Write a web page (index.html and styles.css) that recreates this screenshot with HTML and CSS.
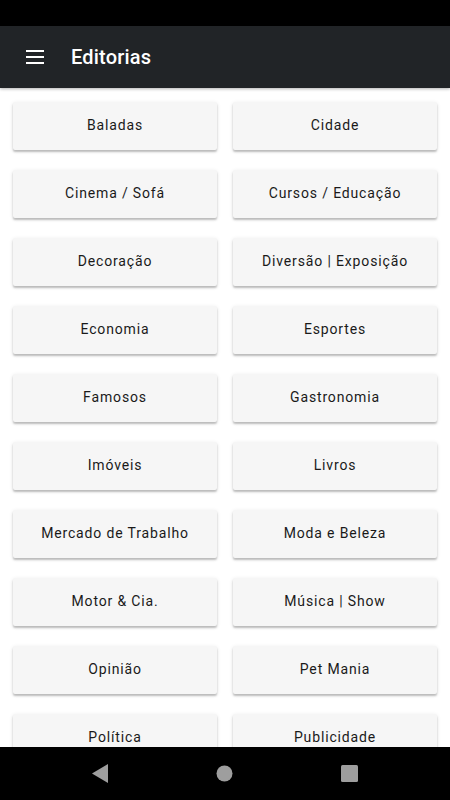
FILE: index.html
```html
<!DOCTYPE html>
<html>
<head>
<meta charset="utf-8">
<link rel="stylesheet" href="styles.css">
</head>
<body>
<div class="screen">
  <div class="status"></div>
  <header class="appbar">
    <svg class="menu" width="18" height="14" viewBox="0 0 18 14"><rect x="0" y="0" width="18" height="2" fill="#fff"/><rect x="0" y="6" width="18" height="2" fill="#fff"/><rect x="0" y="12" width="18" height="2" fill="#fff"/></svg>
    <h1 class="title">Editorias</h1>
  </header>
  <main class="content">
    <div class="grid">
      <div class="btn">Baladas</div>
      <div class="btn">Cidade</div>
      <div class="btn">Cinema / Sofá</div>
      <div class="btn">Cursos / Educação</div>
      <div class="btn">Decoração</div>
      <div class="btn">Diversão | Exposição</div>
      <div class="btn">Economia</div>
      <div class="btn">Esportes</div>
      <div class="btn">Famosos</div>
      <div class="btn">Gastronomia</div>
      <div class="btn">Imóveis</div>
      <div class="btn">Livros</div>
      <div class="btn">Mercado de Trabalho</div>
      <div class="btn">Moda e Beleza</div>
      <div class="btn">Motor &amp; Cia.</div>
      <div class="btn">Música | Show</div>
      <div class="btn">Opinião</div>
      <div class="btn">Pet Mania</div>
      <div class="btn">Política</div>
      <div class="btn">Publicidade</div>
    </div>
  </main>
  <nav class="navbar">
    <svg width="16" height="19" viewBox="0 0 16 19"><polygon points="16,0 16,19 0,9.5" fill="#9e9e9e"/></svg>
    <svg width="17" height="17" viewBox="0 0 17 17"><circle cx="8.5" cy="8.5" r="8" fill="#9e9e9e"/></svg>
    <svg width="17" height="17" viewBox="0 0 17 17"><rect x="0" y="0" width="17" height="17" rx="1.5" fill="#9e9e9e"/></svg>
  </nav>
</div>
</body>
</html>
```

FILE: styles.css
```css
* { box-sizing: border-box; }
html, body { margin: 0; padding: 0; }
body { font-family: Roboto, "Liberation Sans", sans-serif; background: #fff; }
.screen { width: 450px; height: 800px; display: flex; flex-direction: column; overflow: hidden; }
.status { height: 26px; background: #000; flex: none; }
.appbar { height: 62px; background: #212427; display: flex; align-items: center; padding-left: 26px; flex: none; box-shadow: 0 1px 3px rgba(0,0,0,0.3); position: relative; z-index: 1; }
.menu { display: block; }
.title { margin: 0 0 0 27px; color: #fff; font-size: 20px; font-weight: 500; letter-spacing: 0.2px; }
.content { flex: 1; overflow: hidden; padding: 14px 13px 0 13px; }
.grid { display: grid; grid-template-columns: 204px 204px; column-gap: 16px; row-gap: 20px; }
.btn { height: 48px; padding-bottom: 2px; background: #f6f6f6; border-radius: 2px; display: flex; align-items: center; justify-content: center; font-size: 14px; letter-spacing: 0.85px; color: #1a1a1a; font-weight: 400; box-shadow: 0 2px 2px rgba(0,0,0,0.22), 0 1px 4px rgba(0,0,0,0.1); }
.navbar { height: 53px; background: #000; flex: none; display: flex; align-items: center; justify-content: center; gap: 0; padding-left: 0; }
.navbar svg { display: block; margin: 0 54px; }
```
